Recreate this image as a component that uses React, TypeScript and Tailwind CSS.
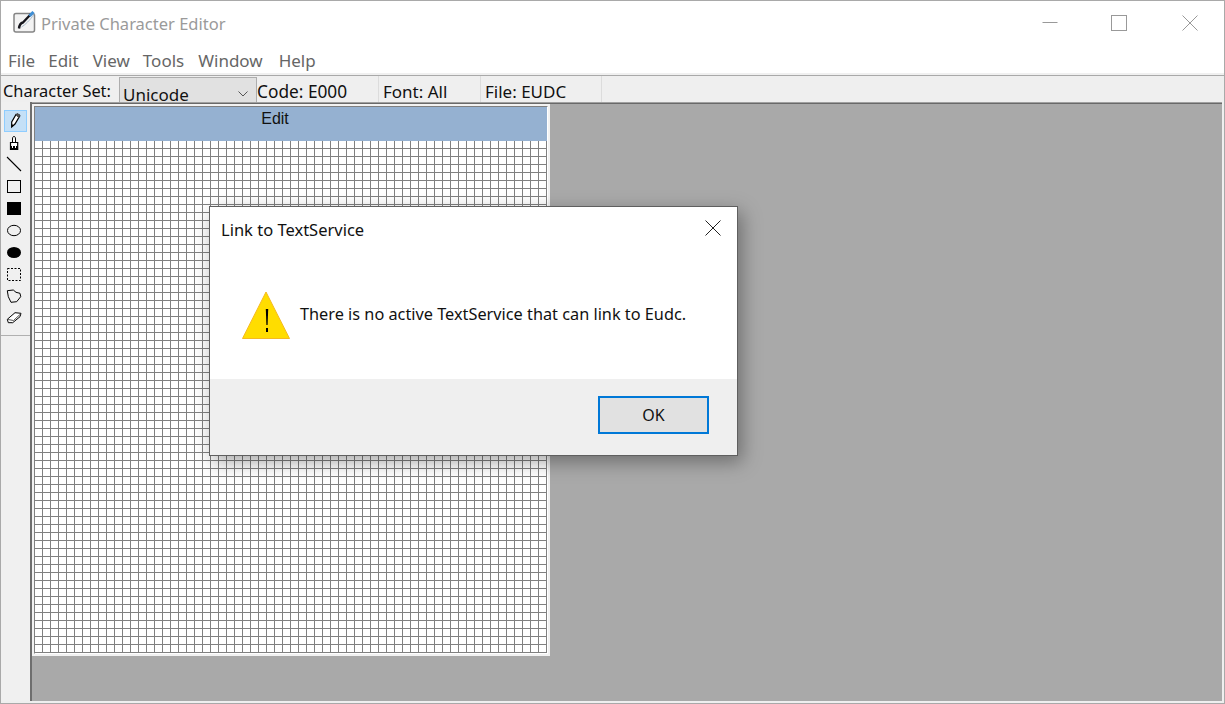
import React from "react";

function Tool({ active, children }: { active?: boolean; children: React.ReactNode }) {
  return (
    <div className={`w-[23px] h-[22px] flex items-center justify-center border ${active ? "bg-[#c4e0f7] border-[#8fcdff]" : "border-transparent"}`}>
      <svg width="18" height="18" viewBox="0 0 18 18" fill="none" stroke="#000" strokeWidth="1" className="ml-[-3px]">{children}</svg>
    </div>
  );
}

export default function App() {
  return (
    <div className="relative w-[1225px] h-[704px] overflow-hidden bg-white border border-[#a9a9a9] flex flex-col font-['Noto_Sans','Open_Sans',sans-serif] text-[#111]">
      {/* Title bar */}
      <div className="h-[38px] shrink-0 flex items-center pl-[10px] pt-[8px]">
        <svg width="28" height="26" viewBox="0 0 28 26" className="mr-[2px]">
          <rect x="3" y="2.5" width="20.5" height="18.5" rx="2" fill="#f3f3f3" stroke="#858585" strokeWidth="1.5" />
          <path d="M8 17.5 C8.5 13 10 12 12 11.5 L20 3" fill="none" stroke="#15151c" strokeWidth="2.4" />
          <path d="M10.5 16 C14 14 19 9 23 3.5" fill="none" stroke="#a9bccd" strokeWidth="1" />
          <path d="M18.5 5 L22.5 1" fill="none" stroke="#3f8fd6" strokeWidth="3" />
        </svg>
        <span className="text-[16.5px] text-[#9a9a9a] leading-none">Private Character Editor</span>
        <div className="ml-auto self-start mt-[6px] flex items-center pr-[26px] gap-[56px]">
          <svg width="16" height="16" viewBox="0 0 16 16" stroke="#999" fill="none"><path d="M0.5 7.5H15.5" /></svg>
          <svg width="16" height="16" viewBox="0 0 16 16" stroke="#999" fill="none" className="ml-[-3px]"><rect x="0.5" y="0.5" width="15" height="15" /></svg>
          <svg width="16" height="16" viewBox="0 0 16 16" stroke="#999" fill="none" className="ml-[-1px]"><path d="M0.5 0.5L15.5 15.5M15.5 0.5L0.5 15.5" /></svg>
        </div>
      </div>
      {/* Menu */}
      <div className="h-[34px] shrink-0 flex items-center pl-[7px] pt-[8px] text-[17px] text-[#666] leading-none">
        <span>File</span>
        <span className="ml-[13px]">Edit</span>
        <span className="ml-[14px]">View</span>
        <span className="ml-[13px]">Tools</span>
        <span className="ml-[14px]">Window</span>
        <span className="ml-[16px]">Help</span>
      </div>
      <div className="h-[2px] shrink-0 bg-[#f0f0f0]" />
      <div className="h-[1px] shrink-0 bg-[#a9a9a9]" />
      {/* Toolbar */}
      <div className="h-[26px] shrink-0 bg-[#efefef] flex items-stretch text-[17px] leading-none text-[#111]">
        <div className="w-[118px] pl-[2px] pt-[4px] flex items-center whitespace-nowrap text-[16.4px]">Character Set:</div>
        <div className="w-[138px] mt-[1px] bg-[#e1e1e1] border border-[#adadad] border-b-0 flex items-end pl-[3px] pr-[8px] justify-between">
          <span className="translate-y-[1px]">Unicode</span>
          <svg width="10" height="6" viewBox="0 0 10 6" fill="none" stroke="#555" className="mb-[5px]"><path d="M0.5 0.5L5 5L9.5 0.5" /></svg>
        </div>
        <div className="w-[122px] pt-[5px] flex items-center border-r border-[#dcdcdc] text-[17.3px]">Code: E000</div>
        <div className="w-[102px] pl-[4px] pt-[4px] flex items-center border-r border-[#dcdcdc]">Font: All</div>
        <div className="w-[121px] pl-[4px] pt-[4px] flex items-center border-r border-[#dcdcdc]">File: EUDC</div>
      </div>
      {/* Body */}
      <div className="flex-1 flex min-h-0 bg-[#efefef] pb-[2px] pr-[2px]">
        <div className="w-[29px] shrink-0 bg-[#f0f0f0] flex flex-col">
          <div className="h-[234px] border-b border-[#b0b0b0] pt-[8px] pl-[3px] flex flex-col">
            <Tool active>
              <path d="M6.7 15 L6.7 10 L11 2.5 L14.7 4 L10 12 Z" fill="#fff" strokeWidth="1.2" />
              <path d="M11 2.5 L12 1.5 L15 3 L13.5 5.5 Z" fill="#555" stroke="#444" />
              <path d="M6.5 15.5 L6.5 12 L8.8 13.3 Z" fill="#000" stroke="none" />
            </Tool>
            <Tool>
              <path d="M7.5 5 C7.5 1.5 10.5 1.5 10.5 5 V8.5 H7.5 Z" fill="#fff" />
              <path d="M5.5 8.5 H12.7 V15.5 H5.5 Z" fill="#fff" strokeWidth="1.2" />
              <path d="M5.5 12 H12.7 V16 H5.5 Z" fill="#000" stroke="none" />
              <path d="M7.5 12 V14 M10.5 12 V14" stroke="#fff" />
            </Tool>
            <Tool><path d="M2 1 L16 15" strokeWidth="1.1" /></Tool>
            <Tool><rect x="2.5" y="2.5" width="13" height="12" /></Tool>
            <Tool><rect x="2" y="2" width="14" height="13" fill="#000" stroke="none" /></Tool>
            <Tool><ellipse cx="9" cy="8.5" rx="6.5" ry="5.2" /></Tool>
            <Tool><ellipse cx="9" cy="8.5" rx="7" ry="5.5" fill="#000" stroke="none" /></Tool>
            <Tool><rect x="2.5" y="2.5" width="13" height="12" strokeDasharray="2 1.5" /></Tool>
            <Tool><path d="M2.3 2.7 L8.3 2 L11 4.3 L15 5.3 L15.7 8.7 L11.7 13.7 L6 14.3 L3.3 8.7 Z" strokeLinejoin="round" /></Tool>
            <Tool>
              <path d="M2.3 9.3 L10 2.7 L16 3.3 L15 6.7 L7.7 12.7 L3.3 12.7 Z" fill="#fff" strokeLinejoin="round" />
              <path d="M3 9.5 L8.5 10.5 L15.5 4" stroke="#555" />
            </Tool>
          </div>
        </div>
        <div className="w-[2px] shrink-0 bg-[#6e6e6e]" />
        <div className="flex-1 min-w-0 flex flex-col border-t border-t-[#a0a0a0]">
          <div className="flex-1 min-h-0 bg-[#a9a9a9] border-t border-t-[#696969]">
            <div className="w-[518px] h-[552px] bg-[#f2f2f2] p-[2px]">
              <div className="h-full flex flex-col border-t border-l border-t-[#808080] border-l-[#808080] border-r border-b border-r-white border-b-white">
                <div className="h-[34px] shrink-0 bg-[#95b1d1] pr-[32px] text-center text-[16px] leading-[24px] text-[#111] font-['Liberation_Sans',sans-serif]">Edit</div>
                <div className="flex-1 bg-white bg-[linear-gradient(to_right,#808080_1px,transparent_1px),linear-gradient(to_bottom,#808080_1px,transparent_1px)] bg-[length:8px_8px] bg-[position:7px_7px]" />
              </div>
            </div>
          </div>
        </div>
      </div>
      {/* Dialog */}
      <div className="absolute left-[208px] top-[205px] w-[529px] h-[250px] bg-white border border-[#5f5f5f] shadow-[4px_6px_18px_rgba(0,0,0,0.35)] flex flex-col">
        <div className="h-[172px] shrink-0 flex flex-col">
          <div className="h-[46px] flex items-center justify-between pl-[11px] pr-[16px]">
            <span className="text-[16.5px] leading-none text-[#111]">Link to TextService</span>
            <svg width="16" height="16" viewBox="0 0 16 16" stroke="#222" fill="none" className="mb-[4px]"><path d="M0.5 0.5L15.5 15.5M15.5 0.5L0.5 15.5" /></svg>
          </div>
          <div className="flex items-center pl-[32px] pt-[38px]">
            <svg width="48" height="48" viewBox="0 0 48 48" className="mr-[10px]">
              <path d="M24 1 L47.5 47.5 L0.5 47.5 Z" fill="#ffdd00" stroke="#f5b921" strokeWidth="1" />
              <path d="M23.8 18 H26.2 L25.6 34 H24.4 Z" fill="#000" />
              <rect x="24" y="37" width="2" height="4" fill="#000" />
            </svg>
            <span className="text-[16.3px] leading-none text-[#111] mb-[1px]">There is no active TextService that can link to Eudc.</span>
          </div>
        </div>
        <div className="flex-1 bg-[#efefef] flex items-start justify-end pt-[17px] pr-[28px]">
          <div className="w-[111px] h-[38px] bg-[#e1e1e1] border-2 border-[#0078d7] flex items-center justify-center text-[16px] text-[#111]">OK</div>
        </div>
      </div>
    </div>
  );
}
